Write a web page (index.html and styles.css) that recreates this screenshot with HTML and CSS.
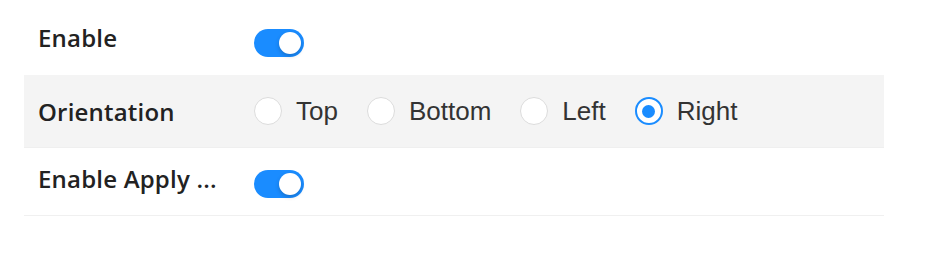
FILE: index.html
```html
<!DOCTYPE html>
<html>
<head>
<meta charset="utf-8">
<link rel="stylesheet" href="styles.css">
</head>
<body>
<div class="panel">
  <div class="row row-first">
    <div class="label">Enable</div>
    <div class="control">
      <span class="switch on"><span class="knob"></span></span>
    </div>
  </div>
  <div class="row row-alt">
    <div class="label">Orientation</div>
    <div class="control radios">
      <label class="radio"><span class="dot"></span><span class="rtext">Top</span></label>
      <label class="radio"><span class="dot"></span><span class="rtext">Bottom</span></label>
      <label class="radio"><span class="dot"></span><span class="rtext">Left</span></label>
      <label class="radio checked"><span class="dot"></span><span class="rtext">Right</span></label>
    </div>
  </div>
  <div class="row row-last">
    <div class="label">Enable Apply ...</div>
    <div class="control">
      <span class="switch on"><span class="knob"></span></span>
    </div>
  </div>
</div>
</body>
</html>
```
FILE: styles.css
```css
html, body {
  margin: 0;
  padding: 0;
  background: #ffffff;
}

.panel {
  width: 860px;
  margin: 7px 0 0 24px;
}

.row {
  display: flex;
  align-items: center;
  border-bottom: 1px solid #f0f0f0;
  box-sizing: border-box;
}

.row-first {
  height: 68px;
  border-bottom: none;
}

.row-alt {
  height: 73px;
  background: #f4f4f4;
  border-bottom: 1px solid #efefef;
}

.row-last {
  height: 68px;
}

.label {
  width: 216px;
  padding-left: 14px;
  box-sizing: content-box;
  font-family: "Open Sans", "Noto Sans", sans-serif;
  font-weight: 600;
  font-size: 24px;
  letter-spacing: 0.2px;
  color: #222222;
  white-space: nowrap;
  flex: none;
  margin-top: -7px;
}

.row-alt .label {
  margin-top: 0;
}

.control {
  display: flex;
  align-items: center;
}

.switch {
  display: inline-block;
  position: relative;
  width: 50px;
  height: 28px;
  border-radius: 14px;
  background: #1a8cff;
  margin-top: 4px;
}

.switch .knob {
  position: absolute;
  top: 3px;
  right: 3px;
  width: 22px;
  height: 22px;
  border-radius: 50%;
  background: #ffffff;
  box-shadow: 0 2px 4px rgba(0, 0, 0, 0.2);
}

.radios {
  gap: 29px;
}

.radio {
  display: flex;
  align-items: center;
  gap: 14px;
  font-family: "Liberation Sans", Arial, sans-serif;
  font-size: 26px;
  color: #333333;
}

.dot {
  width: 28px;
  height: 28px;
  border-radius: 50%;
  border: 1.5px solid #dcdcdc;
  background: #ffffff;
  box-sizing: border-box;
  position: relative;
  flex: none;
}

.radio.checked .dot {
  border: 2px solid #1a8cff;
}

.radio.checked .dot::after {
  content: "";
  position: absolute;
  left: 5.5px;
  top: 5.5px;
  width: 13px;
  height: 13px;
  border-radius: 50%;
  background: #1a8cff;
}
```
